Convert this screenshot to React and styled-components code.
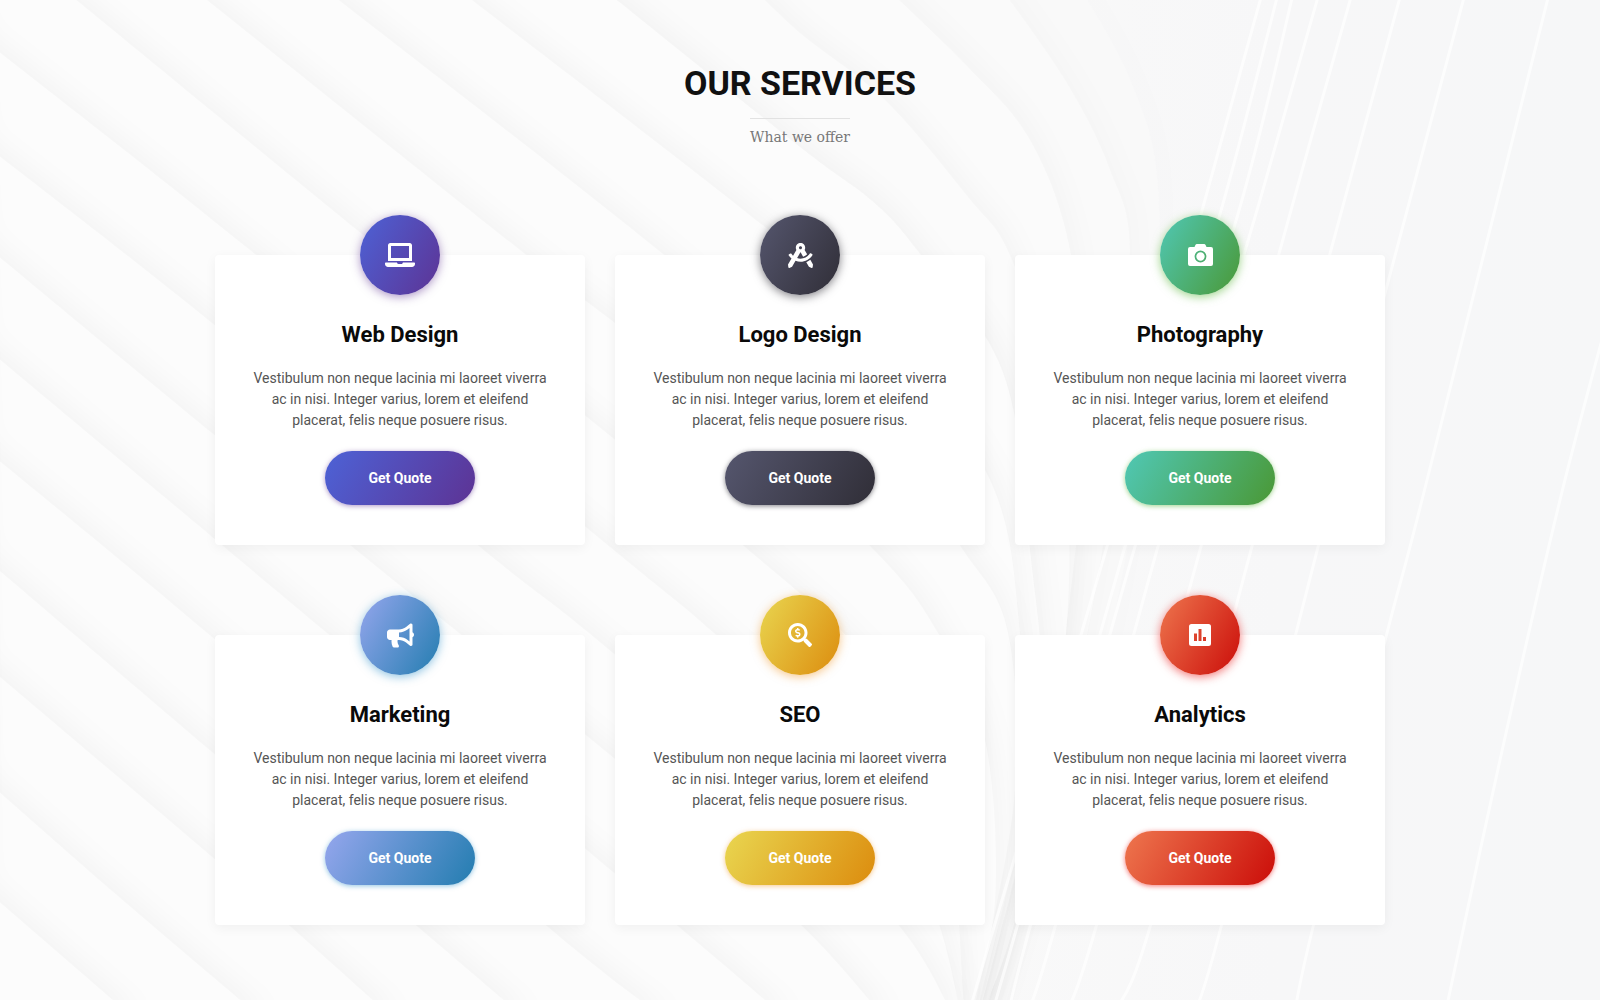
import React from "react";
import styled, { createGlobalStyle } from "styled-components";
import { FaLaptop, FaDraftingCompass, FaBullhorn, FaSearchDollar } from "react-icons/fa";

const GlobalStyle = createGlobalStyle`
  *, *::before, *::after { box-sizing: border-box; }
  body {
    margin: 0;
    background: #fbfbfb;
    color: #555;
    font-family: Roboto, "Liberation Sans", sans-serif;
  }
`;

const Section = styled.section`
  position: relative;
  overflow: hidden;
  min-height: 100vh;
  padding: 63px 16px 75px;
`;

const Backdrop = styled.svg`
  position: absolute;
  inset: 0;
  width: 100%;
  height: 100%;
`;

const Panel = styled.path`
  fill: ${(p) => p.$tone};
  filter: drop-shadow(6px -6px 12px rgba(0, 0, 0, ${(p) => p.$depth}));
`;

const Rib = styled.path`
  fill: none;
  stroke: #fff;
  stroke-width: 3px;
  opacity: 0.7;
`;

const Container = styled.div`
  position: relative;
  max-width: 1170px;
  margin: 0 auto;
`;

const Header = styled.header`
  display: flex;
  flex-direction: column;
  align-items: center;
  margin-bottom: 67px;
`;

const Title = styled.h2`
  margin: 0;
  color: #111;
  font-size: 34px;
  line-height: 40px;
  font-weight: 700;
  text-transform: uppercase;
`;

const Subtitle = styled.p`
  margin: 15px 0 0;
  padding-top: 7px;
  border-top: 1px solid #e2e2e2;
  color: #777;
  font-family: "DejaVu Serif", serif;
  font-size: 14px;
  line-height: 22px;
`;

const Grid = styled.div`
  display: grid;
  grid-template-columns: repeat(auto-fit, minmax(300px, 1fr));
  column-gap: 30px;
  row-gap: 50px;
`;

const Card = styled.article`
  display: flex;
  flex-direction: column;
  align-items: center;
  margin-top: 40px;
  padding: 0 32px 40px;
  border-radius: 4px;
  background: #fff;
  box-shadow: 0 3px 12px rgba(0, 0, 0, 0.05);
  text-align: center;
`;

const Badge = styled.div`
  display: flex;
  align-items: center;
  justify-content: center;
  width: 80px;
  height: 80px;
  margin-top: -40px;
  border-radius: 50%;
  background: linear-gradient(120deg, ${(p) => p.$from}, ${(p) => p.$to});
  box-shadow: 0 2px 10px ${(p) => p.$glow};
  color: #fff;
`;

const CardTitle = styled.h3`
  margin: 25px 0 0;
  color: #0a0a0a;
  font-size: 22px;
  line-height: 30px;
  font-weight: 700;
`;

const CardText = styled.p`
  margin: 18px 0 0;
  font-size: 14px;
  line-height: 21px;
`;

const QuoteButton = styled.button`
  width: 150px;
  height: 54px;
  margin-top: 20px;
  border: 0;
  border-radius: 27px;
  background: linear-gradient(120deg, ${(p) => p.$from}, ${(p) => p.$to});
  box-shadow: 0 1px 5px ${(p) => p.$glow};
  color: #fff;
  font: inherit;
  font-size: 14px;
  font-weight: 700;
  cursor: pointer;
`;

function CameraIcon() {
  return (
    <svg width="25" height="22" viewBox="0 0 25 22" fill="currentColor" aria-hidden="true">
      <path
        fillRule="evenodd"
        d="M9 0h7q1.200 0 1.700 1.200L18.500 3H23q2 0 2 2v15q0 2-2 2H2q-2 0-2-2V5q0-2 2-2h4.500l.8-1.800Q7.800 0 9 0ZM12.500 6.600a5.900 5.900 0 1 0 0 11.800a5.900 5.900 0 1 0 0-11.800ZM12.500 8.300a4.200 4.200 0 1 1 0 8.400a4.200 4.200 0 1 1 0-8.400Z"
      />
    </svg>
  );
}

function ChartIcon() {
  return (
    <svg width="22" height="22" viewBox="0 0 22 22" fill="currentColor" aria-hidden="true">
      <path
        fillRule="evenodd"
        d="M2.500 0h17Q22 0 22 2.500v17q0 2.500-2.500 2.500h-17Q0 22 0 19.500v-17Q0 0 2.500 0ZM5 9.500V17h3V9.500ZM9.500 5v12h3V5ZM14 13v4h3v-4Z"
      />
    </svg>
  );
}

const services = [
  { name: "Web Design", Icon: FaLaptop, size: 30, from: "#4d62d6", to: "#5d3394", glow: "rgba(93, 48, 144, 0.5)" },
  { name: "Logo Design", Icon: FaDraftingCompass, size: 25, from: "#55566e", to: "#302e37", glow: "rgba(48, 46, 55, 0.6)" },
  { name: "Photography", Icon: CameraIcon, size: 25, from: "#50c8b5", to: "#4a9835", glow: "rgba(94, 184, 60, 0.6)" },
  { name: "Marketing", Icon: FaBullhorn, size: 27, from: "#95a6ed", to: "#237db0", glow: "rgba(35, 140, 200, 0.5)" },
  { name: "SEO", Icon: FaSearchDollar, size: 24, from: "#e9d650", to: "#dc8c0e", glow: "rgba(240, 145, 30, 0.5)" },
  { name: "Analytics", Icon: ChartIcon, size: 22, from: "#ee764e", to: "#cb0d09", glow: "rgba(235, 30, 30, 0.6)" },
];

// Overlapping paper blades, listed from the rearmost (right) to the front (left).
const blades = [
  [[1075, -20], [1130, 80], [1158, 190], [1150, 400], [1095, 700], [1000, 1020]],
  [[995, -20], [1065, 80], [1110, 170], [1130, 260], [1110, 500], [1060, 760], [990, 1020]],
  [[878, -20], [968, 67], [1030, 140], [1070, 250], [1085, 420], [1055, 700], [985, 1020]],
  [[745, -20], [800, 33], [885, 100], [968, 197], [1012, 260], [1060, 420], [1066, 633], [1020, 900], [980, 1020]],
  [[592, -20], [800, 147], [871, 200], [917, 250], [1002, 370], [1030, 550], [1040, 750], [978, 1020]],
  [[446, -20], [765, 227], [880, 330], [990, 480], [1020, 633], [1024, 800], [975, 1020]],
  [[313, -20], [658, 250], [790, 370], [900, 470], [963, 550], [1008, 633], [1014, 800], [972, 1020]],
  [[182, -20], [520, 250], [700, 390], [871, 547], [938, 633], [985, 740], [995, 900], [968, 1020]],
  [[52, -20], [357, 230], [560, 395], [745, 547], [860, 650], [940, 760], [965, 1020]],
  [[-20, 37], [250, 250], [610, 547], [714, 633], [850, 760], [930, 900], [962, 1020]],
  [[-20, 141], [212, 323], [480, 547], [589, 633], [760, 780], [900, 927], [955, 1020]],
  [[-20, 241], [212, 433], [408, 592], [640, 780], [803, 927], [886, 1020]],
  [[-20, 343], [168, 500], [327, 633], [679, 927], [788, 1020]],
  [[-20, 445], [212, 637], [548, 927], [667, 1020]],
  [[-20, 554], [212, 752], [418, 927], [527, 1020]],
  [[-20, 660], [204, 850], [291, 927], [395, 1020]],
  [[-20, 775], [118, 896], [264, 1020]],
  [[-20, 885], [136, 1020]],
];

const rearTones = ["#f9f9f9", "#fafafa", "#fbfbfb", "#fbfbfb"];
const rearDepths = [0.008, 0.016, 0.024, 0.028];

const ribs = [
  [[1263, -10], [1203, 207], [1106, 550], [994, 927], [970, 1010]],
  [[1279, -10], [1224, 200], [1124, 550], [1017, 927], [993, 1010]],
  [[1294, -10], [1240, 207], [1134, 550], [1030, 927], [1009, 1010]],
  [[1320, -10], [1260, 200], [1157, 550], [1055, 927], [1029, 1010]],
  [[1353, -10], [1280, 250], [1200, 550], [1096, 927], [1068, 1010]],
  [[1402, -10], [1331, 250], [1251, 550], [1150, 927], [1116, 1010]],
  [[1466, -10], [1392, 267], [1318, 547], [1221, 927], [1196, 1010]],
  [[1550, -10], [1422, 500], [1387, 633], [1313, 927], [1295, 1010]],
  [[1610, 310], [1560, 500], [1500, 760], [1446, 1010]],
];

function smooth(points) {
  let d = `M${points[0][0]} ${points[0][1]}`;
  for (let i = 0; i < points.length - 1; i += 1) {
    const a = points[Math.max(i - 1, 0)];
    const b = points[i];
    const c = points[i + 1];
    const e = points[Math.min(i + 2, points.length - 1)];
    d += ` C${b[0] + (c[0] - a[0]) / 6} ${b[1] + (c[1] - a[1]) / 6} ${c[0] - (e[0] - b[0]) / 6} ${c[1] - (e[1] - b[1]) / 6} ${c[0]} ${c[1]}`;
  }
  return d;
}

function PaperBackdrop() {
  return (
    <Backdrop viewBox="0 0 1600 1000" preserveAspectRatio="xMidYMid slice" aria-hidden="true">
      <defs>
        <linearGradient id="shade" x1="0" x2="1" y1="0" y2="0">
          <stop offset="0.6" stopColor="#f9f9f9" />
          <stop offset="0.8" stopColor="#f7f7f8" />
          <stop offset="1" stopColor="#f6f7f8" />
        </linearGradient>
      </defs>
      <rect width="1600" height="1000" fill="url(#shade)" />
      {blades.map((points, i) => (
        <Panel
          key={i}
          $tone={rearTones[i] || "#fcfcfc"}
          $depth={rearDepths[i] || 0.032}
          d={`${smooth(points)} L-40 1040 L-40 -40 Z`}
        />
      ))}
      {ribs.map((points, i) => (
        <Rib key={i} d={smooth(points)} />
      ))}
    </Backdrop>
  );
}

export default function App() {
  return (
    <>
      <GlobalStyle />
      <Section>
        <PaperBackdrop />
        <Container>
          <Header>
            <Title>Our Services</Title>
            <Subtitle>What we offer</Subtitle>
          </Header>
          <Grid>
            {services.map(({ name, Icon, size, from, to, glow }) => (
              <Card key={name}>
                <Badge $from={from} $to={to} $glow={glow}>
                  <Icon size={size} aria-hidden="true" />
                </Badge>
                <CardTitle>{name}</CardTitle>
                <CardText>
                  Vestibulum non neque lacinia mi laoreet viverra ac in nisi. Integer varius, lorem et
                  eleifend placerat, felis neque posuere risus.
                </CardText>
                <QuoteButton type="button" $from={from} $to={to} $glow={glow}>
                  Get Quote
                </QuoteButton>
              </Card>
            ))}
          </Grid>
        </Container>
      </Section>
    </>
  );
}
